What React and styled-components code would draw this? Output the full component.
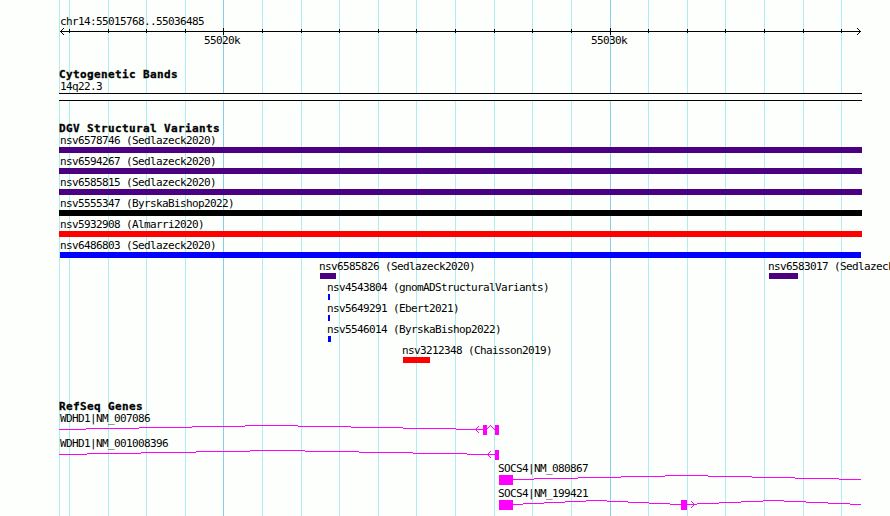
import React from "react";
import styled, { createGlobalStyle } from "styled-components";

const GlobalStyle = createGlobalStyle`
  body {
    margin: 0;
    background: #fdfffc;
    overflow: hidden;
  }
`;

/* =========================
      DATA
========================= */
const WIDTH = 890;
const HEIGHT = 516;

const MAJOR = [223, 610];
const MINOR = [
  69, 108, 146, 185, 262, 301, 339, 378, 416, 455, 494, 532, 571, 648, 687, 725,
  764, 803, 841,
];

const VARIANTS = [
  [{ name: "nsv6578746 (Sedlazeck2020)", x: 59, w: 803, color: "#4b0082" }],
  [{ name: "nsv6594267 (Sedlazeck2020)", x: 59, w: 803, color: "#4b0082" }],
  [{ name: "nsv6585815 (Sedlazeck2020)", x: 59, w: 803, color: "#4b0082" }],
  [{ name: "nsv5555347 (ByrskaBishop2022)", x: 59, w: 803, color: "#000000" }],
  [{ name: "nsv5932908 (Almarri2020)", x: 59, w: 803, color: "#ff0000" }],
  [{ name: "nsv6486803 (Sedlazeck2020)", x: 60, w: 801, color: "#0000ff", inset: 0 }],
  [
    { name: "nsv6585826 (Sedlazeck2020)", x: 320, w: 16, color: "#4b0082", inset: -1 },
    { name: "nsv6583017 (Sedlazeck2020)", x: 769, w: 29, color: "#4b0082", inset: -1 },
  ],
  [{ name: "nsv4543804 (gnomADStructuralVariants)", x: 328, w: 2, color: "#0000ff", inset: -1 }],
  [{ name: "nsv5649291 (Ebert2021)", x: 328, w: 2, color: "#0000ff", inset: -1 }],
  [{ name: "nsv5546014 (ByrskaBishop2022)", x: 328, w: 3, color: "#0000ff", inset: -1 }],
  [{ name: "nsv3212348 (Chaisson2019)", x: 403, w: 27, color: "#ff0000", inset: -1 }],
];

// exons: [x, width]
// introns: a start x, then [end x, height above the gene's baseline] for each step
const GENES = [
  {
    name: "WDHD1|NM_007086",
    labelX: 60,
    exons: [[483, 4], [495, 4]],
    introns: [
      {
        from: 59,
        steps: [[86, 0], [139, 1], [192, 2], [245, 3], [298, 4], [351, 3], [403, 2], [456, 1], [483, 0]],
      },
      {
        from: 487,
        steps: [[488, 1], [489, 2], [490, 3], [491, 4], [492, 3], [493, 2], [494, 1], [495, 0]],
      },
    ],
    arrow: { x: 476, dir: 1 },
  },
  {
    name: "WDHD1|NM_001008396",
    labelX: 60,
    exons: [[495, 4]],
    introns: [
      {
        from: 59,
        steps: [[87, 0], [141, 1], [196, 2], [250, 3], [305, 4], [359, 3], [413, 2], [467, 1], [495, 0]],
      },
    ],
    arrow: { x: 488, dir: 1 },
  },
  {
    name: "SOCS4|NM_080867",
    labelX: 498,
    exons: [[499, 14]],
    introns: [
      {
        from: 513,
        steps: [[534, 0], [578, 1], [621, 2], [665, 3], [708, 4], [752, 3], [795, 2], [839, 1], [861, 0]],
      },
    ],
  },
  {
    name: "SOCS4|NM_199421",
    labelX: 498,
    exons: [[499, 14], [681, 6]],
    introns: [
      {
        from: 513,
        steps: [[523, 0], [544, 1], [565, 2], [586, 3], [607, 4], [628, 3], [649, 2], [670, 1], [681, 0]],
      },
      {
        from: 687,
        steps: [[697, 0], [719, 1], [741, 2], [763, 3], [784, 4], [806, 3], [828, 2], [850, 1], [861, 0]],
      },
    ],
    arrow: { x: 693, dir: -1 },
  },
];

/* =========================
      PAGE
========================= */
const Browser = styled.main`
  position: relative;
  box-sizing: border-box;
  width: ${WIDTH}px;
  height: ${HEIGHT}px;
  padding-top: 16px;
  overflow: hidden;
  background: #fdfffc;
  color: #000;
  font-family: "DejaVu Sans Mono", monospace;
  font-size: 11px;
  line-height: 12px;
  white-space: pre;
`;

const Gridlines = styled.svg`
  position: absolute;
  inset: 0;
  shape-rendering: crispEdges;
`;

const Content = styled.div`
  position: relative;
  display: flex;
  flex-direction: column;
`;

const Label = styled.div`
  height: 12px;
  margin-left: ${(p) => p.$x}px;
  letter-spacing: -0.622px;
`;

const Track = styled.section`
  display: flex;
  flex-direction: column;
  margin-top: ${(p) => p.$gap}px;
`;

const TrackTitle = styled.h2`
  height: 12px;
  margin: 0 0 0 59px;
  font-size: 11px;
  font-weight: 700;
  letter-spacing: 0.378px;
  -webkit-text-stroke: 0.3px #000;
`;

/* =========================
      RULER
========================= */
const Axis = styled.svg`
  display: block;
  margin-top: -1px;
  overflow: visible;
  shape-rendering: crispEdges;
`;

const AxisLabels = styled.div`
  display: grid;
  grid-template-columns: 387px 1fr;
  height: 12px;
  padding-left: 204px;
  letter-spacing: -0.622px;
`;

/* =========================
      CYTOBAND
========================= */
const Band = styled.div`
  box-sizing: border-box;
  width: 803px;
  height: 8px;
  margin-left: 59px;
  border: solid #000;
  border-width: 1px 0;
  background: #fdfffc;
`;

/* =========================
      VARIANTS
========================= */
const VariantRow = styled.div`
  display: grid;
  height: 21px;
`;

const Variant = styled.div`
  grid-area: 1 / 1;
  display: flex;
  flex-direction: column;
  padding-left: ${(p) => p.$x}px;
`;

const VariantBar = styled.div`
  width: ${(p) => p.$w}px;
  height: 6px;
  background: ${(p) => p.$color};
`;

/* =========================
      GENES
========================= */
const GeneRow = styled.div`
  height: 25px;
`;

const GeneGlyph = styled.svg`
  display: block;
  fill: #ff00ff;
  shape-rendering: crispEdges;
`;

const Intron = ({ from, steps }) =>
  steps.map(([end, rise], i) => {
    const start = i ? steps[i - 1][0] : from;
    return <rect key={end} x={start} y={4 - rise} width={end - start} height="1" />;
  });

// blunt widens the tip to three pixels, as on the strand arrows
const Arrowhead = ({ x, y, dir, blunt = 0 }) =>
  [-3, -2, -1, 0, 1, 2, 3].map((d) => (
    <rect
      key={d}
      x={x + dir * Math.max(0, Math.abs(d) - blunt)}
      y={y + d}
      width="1"
      height="1"
    />
  ));

export default function App() {
  return (
    <>
      <GlobalStyle />
      <Browser>
        <Gridlines width={WIDTH} height={HEIGHT}>
          {[59, ...MINOR].map((x) => (
            <rect key={x} x={x} width="1" height={HEIGHT} fill="#afeeee" />
          ))}
          {MAJOR.map((x) => (
            <rect key={x} x={x} width="1" height={HEIGHT} fill="#87ceeb" />
          ))}
        </Gridlines>

        <Content>
          <Label $x={60}>chr14:55015768..55036485</Label>
          <Axis width={WIDTH} height="8">
            <rect x="60" y="4" width="801" height="1" />
            {MINOR.map((x) => (
              <rect key={x} x={x} y="2" width="1" height="4" />
            ))}
            {MAJOR.map((x) => (
              <rect key={x} x={x} y="1" width="1" height="7" />
            ))}
            <Arrowhead x={60} y={4} dir={1} />
            <Arrowhead x={860} y={4} dir={-1} />
          </Axis>
          <AxisLabels>
            <span>55020k</span>
            <span>55030k</span>
          </AxisLabels>

          <Track $gap={22}>
            <TrackTitle>Cytogenetic Bands</TrackTitle>
            <Label $x={60}>14q22.3</Label>
            <Band />
          </Track>

          <Track $gap={22}>
            <TrackTitle>DGV Structural Variants</TrackTitle>
            {VARIANTS.map((row) => (
              <VariantRow key={row[0].name}>
                {row.map(({ name, x, w, color, inset = 1 }) => (
                  <Variant key={name} $x={x}>
                    <Label $x={inset}>{name}</Label>
                    <VariantBar $w={w} $color={color} />
                  </Variant>
                ))}
              </VariantRow>
            ))}
          </Track>

          <Track $gap={35}>
            <TrackTitle>RefSeq Genes</TrackTitle>
            {GENES.map(({ name, labelX, exons, introns, arrow }) => (
              <GeneRow key={name}>
                <Label $x={labelX}>{name}</Label>
                <GeneGlyph width={WIDTH} height="10">
                  {introns.map((intron) => (
                    <Intron key={intron.from} {...intron} />
                  ))}
                  {exons.map(([x, w]) => (
                    <rect key={x} x={x} width={w} height="10" />
                  ))}
                  {arrow && <Arrowhead x={arrow.x} y={4} dir={arrow.dir} blunt={1} />}
                </GeneGlyph>
              </GeneRow>
            ))}
          </Track>
        </Content>
      </Browser>
    </>
  );
}
